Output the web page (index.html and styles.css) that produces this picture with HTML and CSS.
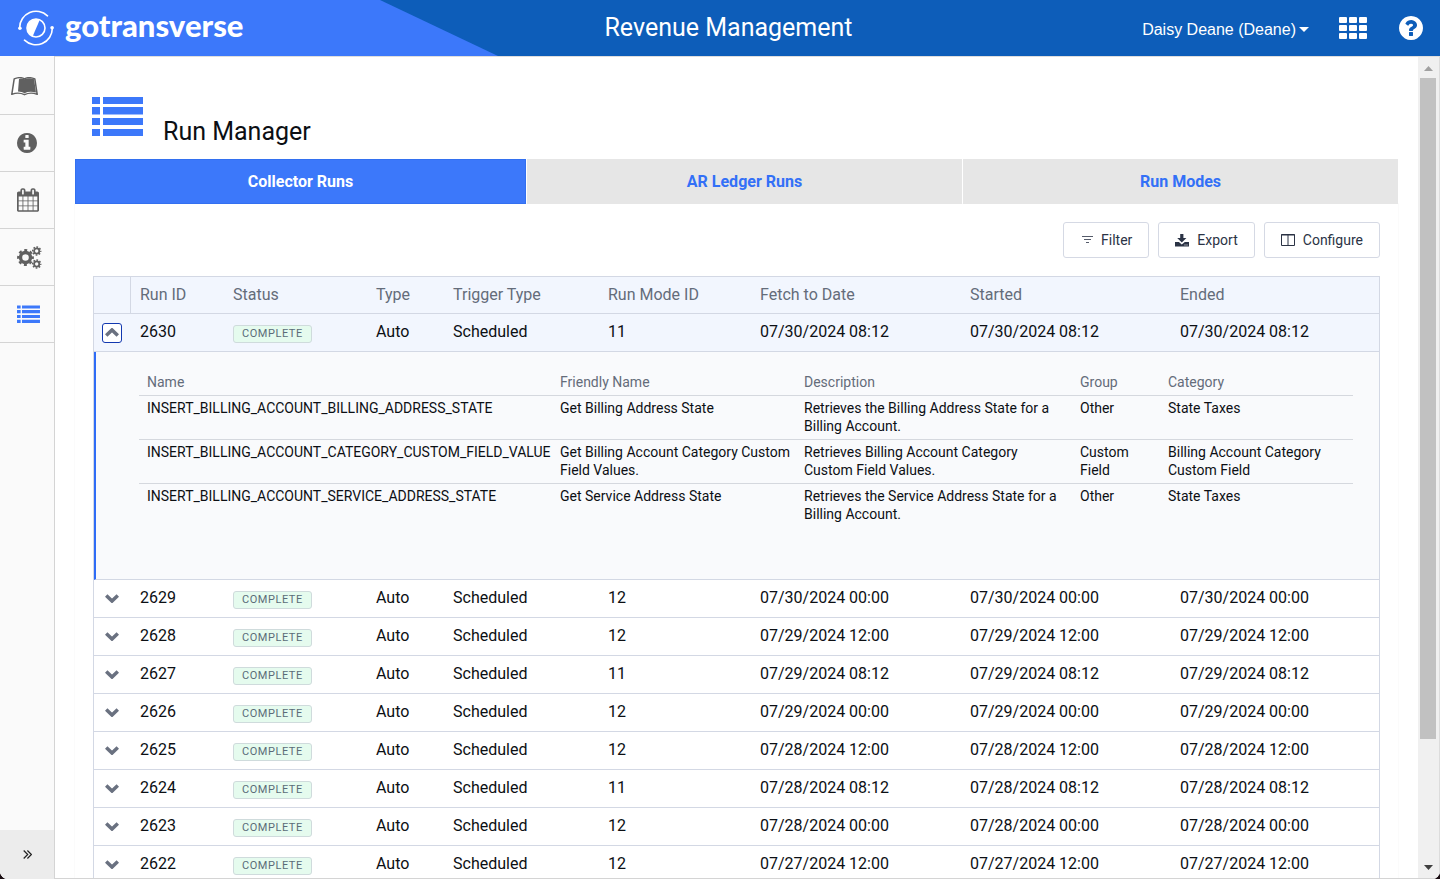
FILE: index.html
```html
<!DOCTYPE html>
<html lang="en">
<head>
<meta charset="utf-8">
<title>Revenue Management - Run Manager</title>
<link rel="stylesheet" href="styles.css">
</head>
<body>
<svg class="sprite" aria-hidden="true">
  <symbol id="chevron-down" viewBox="0 0 14 9"><path d="M1.200 1.500 7 7 12.800 1.500" fill="none" stroke="currentColor" stroke-width="3.600"/></symbol>
  <symbol id="chevron-up" viewBox="0 0 14 9"><path d="M1.200 7.500 7 2 12.800 7.500" fill="none" stroke="currentColor" stroke-width="3.600"/></symbol>
  <symbol id="list" viewBox="0 0 51 40"><path fill="currentColor" d="M0 1h8v7H0zM11 1h40v7H11zM0 11h8v7.500H0zM11 11h40v7.500H11zM0 22h8v7H0zM11 22h40v7H11zM0 33h8v7H0zM11 33h40v7H11z"/></symbol>
</svg>
<div class="app">
  <header class="topbar">
    <a class="brand" href="#" aria-label="gotransverse">
      <svg class="brand-mark" viewBox="0 0 36 36" aria-hidden="true">
        <g fill="none" stroke="#fff" stroke-width="1.6" stroke-linecap="round">
          <path d="M1.700 17.500A16.400 16.400 0 0 1 29.500 5.800"/>
          <path d="M34.300 18.500A16.400 16.400 0 0 1 6.500 30.200"/>
          <circle cx="18" cy="18" r="9"/>
        </g>
        <path d="M21.800 9.800A9 9 0 1 0 14.600 26.400Z" fill="#fff"/>
        <circle cx="1.900" cy="18.300" r="1.800" fill="#fff"/>
        <circle cx="34.100" cy="17.700" r="1.800" fill="#fff"/>
      </svg>
      <span class="brand-name">gotransverse</span>
    </a>
    <div class="product">Revenue Management</div>
    <div class="tools">
      <button class="user" type="button">Daisy Deane (Deane)<svg width="10" height="5" viewBox="0 0 10 5" aria-hidden="true"><path d="M0 0h10L5 5z" fill="currentColor"/></svg></button>
      <button class="tool" type="button" aria-label="Applications">
        <svg width="28" height="22" viewBox="0 0 28 22" fill="currentColor"><rect width="8" height="6" rx="1"/><rect x="10" width="8" height="6" rx="1"/><rect x="20" width="8" height="6" rx="1"/><rect y="8" width="8" height="6" rx="1"/><rect x="10" y="8" width="8" height="6" rx="1"/><rect x="20" y="8" width="8" height="6" rx="1"/><rect y="16" width="8" height="6" rx="1"/><rect x="10" y="16" width="8" height="6" rx="1"/><rect x="20" y="16" width="8" height="6" rx="1"/></svg>
      </button>
      <button class="tool" type="button" aria-label="Help">
        <svg width="24" height="24" viewBox="128 128 1536 1536" fill="currentColor"><path d="M1024 1376v-192q0-14-9-23t-23-9h-192q-14 0-23 9t-9 23v192q0 14 9 23t23 9h192q14 0 23-9t9-23zm256-672q0-88-55.500-163t-138.500-116-170-41q-243 0-371 213-15 24 8 42l132 100q7 6 19 6 16 0 25-12 53-68 86-92 34-24 86-24 48 0 85.500 26t37.500 59q0 38-20 61t-68 45q-63 28-115.500 86.500t-52.500 125.500v36q0 14 9 23t23 9h192q14 0 23-9t9-23q0-19 21.500-49.500t54.500-49.500q32-18 49-28.500t46-35 44.500-48 28-60.500 12.500-81zm384 192q0 209-103 385.500t-279.500 279.500-385.500 103-385.500-103-279.500-279.500-103-385.500 103-385.500 279.500-279.500 385.500-103 385.500 103 279.500 279.500 103 385.500z"/></svg>
      </button>
    </div>
  </header>

  <div class="body">
    <nav class="sidebar" aria-label="Main">
      <a class="nav-item nav-item-book" href="#" aria-label="Catalog">
        <svg width="27" height="19" viewBox="0 0 27 20" preserveAspectRatio="none"><path d="M3.200 2C7 .4 11 .3 13.500 2 16 .3 20 .4 23.800 2L26.200 18.300C22 16.500 17 16.800 13.500 18.600 10 16.800 5 16.500.8 18.300Z" fill="#fff" stroke="#606060" stroke-width="1.500" stroke-linejoin="round"/><path d="M8 2.200C10 1.500 12 1.500 13.500 2.400 16 .8 20 .9 23.100 2.400L25 16.400C21 15 17 15.200 13.500 17 11.500 15.700 9.500 15.300 7 15.200Z" fill="#606060"/></svg>
      </a>
      <a class="nav-item" href="#" aria-label="Information">
        <svg width="20" height="20" viewBox="128 128 1536 1536" fill="currentColor"><path d="M1152 1376v-160q0-14-9-23t-23-9h-96v-512q0-14-9-23t-23-9h-320q-14 0-23 9t-9 23v160q0 14 9 23t23 9h96v320h-96q-14 0-23 9t-9 23v160q0 14 9 23t23 9h448q14 0 23-9t9-23zm-128-896v-160q0-14-9-23t-23-9h-192q-14 0-23 9t-9 23v160q0 14 9 23t23 9h192q14 0 23-9t9-23zm640 416q0 209-103 385.500t-279.500 279.500-385.500 103-385.500-103-279.500-279.500-103-385.500 103-385.500 279.500-279.500 385.500-103 385.500 103 279.500 279.500 103 385.500z"/></svg>
      </a>
      <a class="nav-item" href="#" aria-label="Calendar">
        <svg width="22" height="24" viewBox="64 0 1664 1792" fill="currentColor"><path d="M192 1664h288v-288h-288v288zm352 0h320v-288h-320v288zm-352-352h288v-320h-288v320zm352 0h320v-320h-320v320zm-352-384h288v-288h-288v288zm736 736h320v-288h-320v288zm-384-736h320v-288h-320v288zm768 736h288v-288h-288v288zm-384-352h320v-320h-320v320zm-352-864v-288q0-13-9.500-22.500t-22.500-9.500h-64q-13 0-22.500 9.500t-9.500 22.500v288q0 13 9.500 22.500t22.500 9.500h64q13 0 22.500-9.500t9.500-22.500zm736 864h288v-320h-288v320zm-384-384h320v-288h-320v288zm384 0h288v-288h-288v288zm32-480v-288q0-13-9.500-22.500t-22.500-9.500h-64q-13 0-22.500 9.500t-9.500 22.500v288q0 13 9.500 22.500t22.500 9.500h64q13 0 22.500-9.500t9.500-22.500zm384-64v1280q0 52-38 90t-90 38h-1408q-52 0-90-38t-38-90v-1280q0-52 38-90t90-38h128v-96q0-66 47-113t113-47h64q66 0 113 47t47 113v96h384v-96q0-66 47-113t113-47h64q66 0 113 47t47 113v96h128q52 0 90 38t38 90z"/></svg>
      </a>
      <a class="nav-item" href="#" aria-label="Settings">
        <svg width="25" height="23" viewBox="0 0 25 23" fill="none" stroke="currentColor"><circle cx="8.500" cy="11.500" r="5" stroke-width="3.400"/><circle cx="8.500" cy="11.500" r="7.300" stroke-width="2.200" stroke-dasharray="3 2.733" stroke-dashoffset="1.500"/><circle cx="19.700" cy="5" r="2.600" stroke-width="1.800"/><circle cx="19.700" cy="5" r="4" stroke-width="1.500" stroke-dasharray="1.700 1.442" stroke-dashoffset=".8"/><circle cx="19.700" cy="18" r="2.600" stroke-width="1.800"/><circle cx="19.700" cy="18" r="4" stroke-width="1.500" stroke-dasharray="1.700 1.442" stroke-dashoffset=".8"/></svg>
      </a>
      <a class="nav-item nav-item-active" href="#" aria-label="Run Manager"><svg width="23" height="18"><use href="#list"/></svg></a>
      <button class="expand" type="button" aria-label="Expand menu"><svg width="9" height="9" viewBox="0 0 9 9" fill="none" stroke="currentColor" stroke-width="1.200"><path d="M.7.5l4 4-4 4M4.400.5l4 4-4 4"/></svg></button>
    </nav>

    <main class="content">
      <div class="page-head">
        <svg class="page-icon" width="51" height="40" aria-hidden="true"><use href="#list"/></svg>
        <h1>Run Manager</h1>
      </div>
      <div class="tabs" role="tablist">
        <button class="tab tab-active" type="button" role="tab" aria-selected="true">Collector Runs</button>
        <button class="tab" type="button" role="tab" aria-selected="false">AR Ledger Runs</button>
        <button class="tab" type="button" role="tab" aria-selected="false">Run Modes</button>
      </div>
      <section class="panel">
        <div class="actions">
          <button class="btn" type="button"><svg width="13" height="8" viewBox="-2 0 13 8" stroke="currentColor" fill="none" opacity=".8"><path d="M0 .5h11M2 3.500h7M4 6.500h3"/></svg>Filter</button>
          <button class="btn" type="button"><svg width="14" height="13" viewBox="0 0 14 13" fill="currentColor"><path d="M5.200 0h3.200v4h3L6.800 8.400 2.200 4h3z"/><path d="M0 8h3.900l2.900 2.400L9.800 8H14v4.500H0zM9.500 10.500v1h1v-1zm2 0v1h1v-1z" fill-rule="evenodd"/></svg>Export</button>
          <button class="btn" type="button"><svg width="14" height="12" viewBox="0 0 14 12" fill="none" stroke="currentColor"><path d="M.5.500h13v11H.5zM7 .5v11M0 1h14"/></svg>Configure</button>
        </div>
        <table class="runs">
          <colgroup><col class="c-toggle"><col class="c-id"><col class="c-status"><col class="c-type"><col class="c-trigger"><col class="c-mode"><col class="c-date"><col class="c-date"><col class="c-end"></colgroup>
          <thead>
            <tr><th class="toggle-head" aria-label="Details"></th><th>Run ID</th><th>Status</th><th>Type</th><th>Trigger Type</th><th>Run Mode ID</th><th>Fetch to Date</th><th>Started</th><th>Ended</th></tr>
          </thead>
          <tbody>
            <tr class="open"><td class="toggle-cell"><button class="toggle toggle-open" type="button" aria-label="Collapse run 2630" aria-expanded="true"><svg width="14" height="9"><use href="#chevron-up"/></svg></button></td><td>2630</td><td><span class="badge">COMPLETE</span></td><td>Auto</td><td>Scheduled</td><td>11</td><td>07/30/2024 08:12</td><td>07/30/2024 08:12</td><td>07/30/2024 08:12</td></tr>
            <tr class="details">
              <td colspan="9">
                <table class="steps">
                  <colgroup><col class="s-name"><col class="s-friendly"><col class="s-desc"><col class="s-group"><col class="s-category"></colgroup>
                  <thead><tr><th>Name</th><th>Friendly Name</th><th>Description</th><th>Group</th><th>Category</th></tr></thead>
                  <tbody>
                    <tr><td>INSERT_BILLING_ACCOUNT_BILLING_ADDRESS_STATE</td><td>Get Billing Address State</td><td>Retrieves the Billing Address State for a Billing Account.</td><td>Other</td><td>State Taxes</td></tr>
                    <tr><td>INSERT_BILLING_ACCOUNT_CATEGORY_CUSTOM_FIELD_VALUE</td><td>Get Billing Account Category Custom Field Values.</td><td>Retrieves Billing Account Category Custom Field Values.</td><td>Custom Field</td><td>Billing Account Category Custom Field</td></tr>
                    <tr><td>INSERT_BILLING_ACCOUNT_SERVICE_ADDRESS_STATE</td><td>Get Service Address State</td><td>Retrieves the Service Address State for a Billing Account.</td><td>Other</td><td>State Taxes</td></tr>
                  </tbody>
                </table>
              </td>
            </tr>
            <tr><td class="toggle-cell"><button class="toggle" type="button" aria-label="Expand run 2629" aria-expanded="false"><svg width="14" height="9"><use href="#chevron-down"/></svg></button></td><td>2629</td><td><span class="badge">COMPLETE</span></td><td>Auto</td><td>Scheduled</td><td>12</td><td>07/30/2024 00:00</td><td>07/30/2024 00:00</td><td>07/30/2024 00:00</td></tr>
            <tr><td class="toggle-cell"><button class="toggle" type="button" aria-label="Expand run 2628" aria-expanded="false"><svg width="14" height="9"><use href="#chevron-down"/></svg></button></td><td>2628</td><td><span class="badge">COMPLETE</span></td><td>Auto</td><td>Scheduled</td><td>12</td><td>07/29/2024 12:00</td><td>07/29/2024 12:00</td><td>07/29/2024 12:00</td></tr>
            <tr><td class="toggle-cell"><button class="toggle" type="button" aria-label="Expand run 2627" aria-expanded="false"><svg width="14" height="9"><use href="#chevron-down"/></svg></button></td><td>2627</td><td><span class="badge">COMPLETE</span></td><td>Auto</td><td>Scheduled</td><td>11</td><td>07/29/2024 08:12</td><td>07/29/2024 08:12</td><td>07/29/2024 08:12</td></tr>
            <tr><td class="toggle-cell"><button class="toggle" type="button" aria-label="Expand run 2626" aria-expanded="false"><svg width="14" height="9"><use href="#chevron-down"/></svg></button></td><td>2626</td><td><span class="badge">COMPLETE</span></td><td>Auto</td><td>Scheduled</td><td>12</td><td>07/29/2024 00:00</td><td>07/29/2024 00:00</td><td>07/29/2024 00:00</td></tr>
            <tr><td class="toggle-cell"><button class="toggle" type="button" aria-label="Expand run 2625" aria-expanded="false"><svg width="14" height="9"><use href="#chevron-down"/></svg></button></td><td>2625</td><td><span class="badge">COMPLETE</span></td><td>Auto</td><td>Scheduled</td><td>12</td><td>07/28/2024 12:00</td><td>07/28/2024 12:00</td><td>07/28/2024 12:00</td></tr>
            <tr><td class="toggle-cell"><button class="toggle" type="button" aria-label="Expand run 2624" aria-expanded="false"><svg width="14" height="9"><use href="#chevron-down"/></svg></button></td><td>2624</td><td><span class="badge">COMPLETE</span></td><td>Auto</td><td>Scheduled</td><td>11</td><td>07/28/2024 08:12</td><td>07/28/2024 08:12</td><td>07/28/2024 08:12</td></tr>
            <tr><td class="toggle-cell"><button class="toggle" type="button" aria-label="Expand run 2623" aria-expanded="false"><svg width="14" height="9"><use href="#chevron-down"/></svg></button></td><td>2623</td><td><span class="badge">COMPLETE</span></td><td>Auto</td><td>Scheduled</td><td>12</td><td>07/28/2024 00:00</td><td>07/28/2024 00:00</td><td>07/28/2024 00:00</td></tr>
            <tr><td class="toggle-cell"><button class="toggle" type="button" aria-label="Expand run 2622" aria-expanded="false"><svg width="14" height="9"><use href="#chevron-down"/></svg></button></td><td>2622</td><td><span class="badge">COMPLETE</span></td><td>Auto</td><td>Scheduled</td><td>12</td><td>07/27/2024 12:00</td><td>07/27/2024 12:00</td><td>07/27/2024 12:00</td></tr>
          </tbody>
        </table>
      </section>
    </main>

    <div class="scrollbar" aria-hidden="true">
      <svg class="scroll-arrow" viewBox="0 0 9 5"><path d="M0 5h9L4.500 0z" fill="#a0a0a0"/></svg>
      <div class="scroll-thumb"></div>
      <div class="scroll-rest"></div>
      <svg class="scroll-arrow" viewBox="0 0 9 5"><path d="M0 0h9L4.500 5z" fill="#404040"/></svg>
    </div>
  </div>
</div>
</body>
</html>
```
FILE: styles.css
```css
* { box-sizing: border-box; }

body {
  margin: 0;
  background: #1a0d12;
  color: #0c0f14;
  font: 16px/20px Roboto, "Liberation Sans", sans-serif;
}

button { font: inherit; color: inherit; background: none; border: 0; padding: 0; cursor: pointer; }
a { color: inherit; text-decoration: none; }
svg { display: block; flex: none; }
.sprite { display: none; }

.app {
  display: flex;
  flex-direction: column;
  height: 100vh;
  overflow: hidden;
  border-radius: 0 0 8px 8px;
  background: #fff;
}

/* Top bar */
.topbar {
  display: grid;
  grid-template-columns: 498px 1fr 481px;
  flex: none;
  height: 56px;
  background: #0d5db9;
  color: #fff;
}
.brand {
  display: flex;
  align-items: center;
  gap: 11px;
  padding-left: 18px;
  background: #3c78fa;
  clip-path: polygon(0 0, 380px 0, 100% 100%, 0 100%);
}
.brand-mark { width: 36px; height: 36px; }
.brand-name { font: 900 31px/36px Lato, sans-serif; padding-bottom: 7px; }
.product { display: flex; align-items: center; justify-content: center; font-size: 25px; }
.tools { display: flex; align-items: center; justify-content: flex-end; padding-right: 17px; }
.user {
  display: flex;
  align-items: center;
  gap: 3px;
  margin-right: 30px;
  padding-top: 3px;
  font-family: "Liberation Sans", Arial, sans-serif;
}
.tool + .tool { margin-left: 32px; }

.body { display: flex; flex: 1; min-height: 0; }

/* Sidebar */
.sidebar {
  display: flex;
  flex-direction: column;
  flex: none;
  width: 55px;
  padding-top: 2px;
  background: #fafafa;
  border-right: 1px solid #d4d4d4;
  color: #606060;
}
.nav-item {
  display: flex;
  align-items: center;
  height: 57px;
  padding-left: 17px;
  border-bottom: 1px solid #d4d4d4;
}
.nav-item-book { padding-left: 11px; }
.nav-item-active { color: #3c78fa; }
.expand {
  display: flex;
  align-items: center;
  justify-content: center;
  height: 49px;
  margin-top: auto;
  background: #ececec;
  color: #222;
}

/* Page */
.content {
  flex: 1;
  min-width: 0;
  padding: 0 20px;
  overflow-y: auto;
  scrollbar-width: none;
  border-top: 1px solid #dedede;
  border-bottom: 1px solid #d4d4d4;
}
.page-head { display: flex; align-items: flex-end; gap: 20px; padding: 39px 17px 11px; }
.page-icon { margin-bottom: 12px; color: #3c78fa; }
h1 { margin: 0; font-size: 25px; line-height: 32px; font-weight: 400; }

.tabs { display: grid; grid-template-columns: 451fr 435fr 435fr; gap: 1px; }
.tab { height: 45px; background: #e6e6e6; color: #3370f7; font-weight: 700; }
.tab-active { background: #3c78fa; color: #fff; border: 1px solid #3370f0; }

.panel { padding: 18px; box-shadow: 0 0 0 1px #fbfbfb; }
.actions { display: flex; justify-content: flex-end; gap: 9px; margin-bottom: 18px; }
.btn {
  display: flex;
  align-items: center;
  gap: 8px;
  height: 36px;
  padding: 0 16px;
  border: 1px solid #d5d9e4;
  border-radius: 3px;
  background: #fff;
  color: #2b3345;
  font-size: 14px;
}

/* Runs table */
table { width: 100%; border-collapse: separate; border-spacing: 0; table-layout: fixed; }
th { font-weight: 400; text-align: left; }
.runs { border: 1px solid #d3d8e4; }
.c-toggle { width: 37px; }
.c-id { width: 93px; }
.c-status { width: 143px; }
.c-type { width: 77px; }
.c-trigger { width: 155px; }
.c-mode { width: 152px; }
.c-date { width: 210px; }
.c-end { width: auto; }
.runs > thead { background: #f2f6fe; color: #646c7a; }
.runs > thead th { height: 37px; padding: 0 9px; border-bottom: 1px solid #d3d8e4; }
.runs > thead .toggle-head { border-right: 1px solid #d3d8e4; }
.runs > tbody > tr > td { height: 38px; padding: 0 9px 2px; border-bottom: 1px solid #d3d8e4; }
.runs > tbody > .open { background: #f2f6fe; }
.runs > tbody > tr > .toggle-cell { padding: 0 8px; }

.toggle {
  display: flex;
  align-items: center;
  justify-content: center;
  width: 20px;
  height: 20px;
  border: 1px solid transparent;
  border-radius: 3px;
  color: #6a7180;
}
.toggle-open { border-color: #1238b0; background: #fff; }

.badge {
  display: block;
  width: max-content;
  margin-top: 4px;
  padding: 0 8px;
  border: 1px solid #cfdbdc;
  border-radius: 3px;
  background: #e5fbee;
  color: #5b6b78;
  font-size: 11px;
  line-height: 16px;
  letter-spacing: .05em;
}

/* Expanded run */
.runs > tbody > .details > td {
  height: 228px;
  padding: 17px 26px 50px 43px;
  border-left: 2px solid #2f6cf6;
  background: #f9fafc;
  vertical-align: top;
}
.steps { font-size: 14px; line-height: 18px; }
.s-name { width: 413px; }
.s-friendly { width: 244px; }
.s-desc { width: 276px; }
.s-group { width: 88px; }
.s-category { width: auto; }
.steps th { padding: 4px 4px 4px 8px; color: #646c7a; }
.steps td { padding: 3px 4px 4px 8px; vertical-align: top; border-top: 1px solid #d5d8de; }

/* Scrollbar */
.scrollbar {
  display: flex;
  flex-direction: column;
  flex: none;
  width: 22px;
  padding: 9px 3px 8px 2px;
  background: #f0f0f0;
  border-top: 1px solid #dedede;
  border-right: 1px solid #dcdcdc;
  border-bottom: 1px solid #d4d4d4;
}
.scroll-arrow { width: 9px; height: 5px; align-self: center; }
.scroll-thumb { flex: 660; margin-top: 7px; background: #c1c1c1; }
.scroll-rest { flex: 126; }
```
